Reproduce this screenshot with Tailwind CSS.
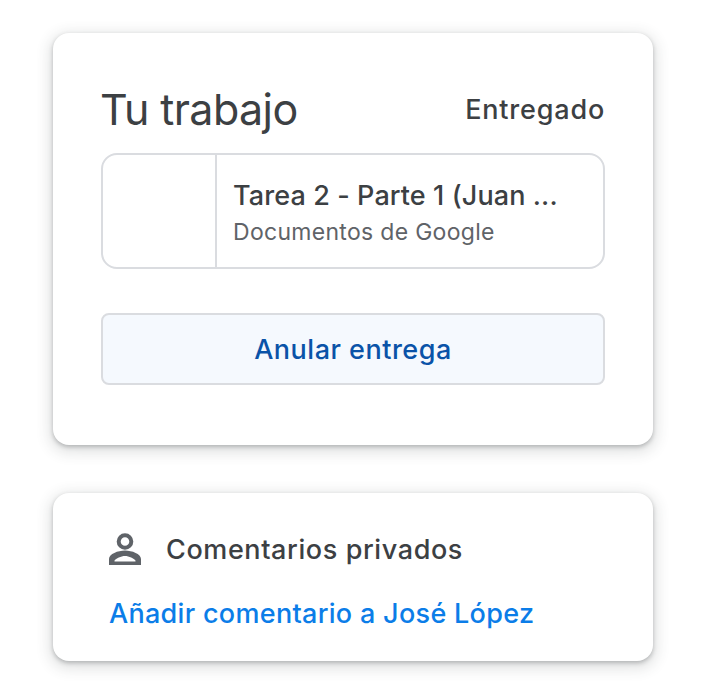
<!DOCTYPE html>
<html lang="es">
<head>
    <meta charset="UTF-8">
    <meta name="viewport" content="width=device-width, initial-scale=1.0">
    <title>Tu trabajo</title>
    <script src="https://cdn.jsdelivr.net/npm/@tailwindcss/browser@4"></script>
</head>
<body class="bg-white font-['Inter',sans-serif]">
    <main class="w-[726px] h-[686px] overflow-hidden pt-[33px] pl-[53px]">
        <section class="w-[600px] h-[412px] bg-white rounded-2xl shadow-[0_2px_4px_rgba(60,64,67,0.3),0_4px_14px_4px_rgba(60,64,67,0.14)] px-12 pt-[50px]">
            <div class="flex justify-between items-center h-[52px] mb-[18px]">
                <h2 class="text-[43px] leading-[52px] text-[#3c4043] tracking-[-0.6px] -ml-px">Tu trabajo</h2>
                <span class="text-[27px] font-medium text-[#3c4043] tracking-[0.8px] pt-0.5">Entregado</span>
            </div>
            <div class="flex h-[116px] border-2 border-[#dadce0] rounded-2xl">
                <div class="w-[114px] border-r-2 border-[#dadce0]"></div>
                <div class="pl-4 pt-[23px] whitespace-nowrap">
                    <p class="text-[27px] leading-9 font-medium text-[#3c4043] tracking-[0.1px]">Tarea 2 - Parte 1 (Juan ...</p>
                    <p class="text-[23px] leading-8 text-[#5f6368] tracking-[0.3px] mt-[2px]">Documentos de Google</p>
                </div>
            </div>
            <button class="block w-full h-[72px] mt-11 pt-0.5 bg-[#f5f9fe] border-2 border-[#dadce0] rounded-lg text-[27px] font-medium text-[#0a53a8] tracking-[0.5px]">Anular entrega</button>
        </section>
        <section class="w-[600px] h-[168px] mt-12 bg-white rounded-2xl shadow-[0_2px_4px_rgba(60,64,67,0.3),0_4px_14px_4px_rgba(60,64,67,0.14)] px-12 pt-8">
            <div class="flex items-center h-12">
                <svg class="w-12 h-12 shrink-0 fill-[#5f6368]" viewBox="0 0 48 48"><path fill-rule="evenodd" d="M24 8.2a8.3 8.3 0 1 1 0 16.6a8.3 8.3 0 1 1 0-16.6zM24 12.2a4.3 4.3 0 1 0 0 8.6a4.3 4.3 0 1 0 0-8.6zM8 40V34C8 29 17 25.5 24 25.5C31 25.5 40 29 40 34V40ZM13.5 36.5H34.5V35.5C33 33.5 28 31 24 31C20 31 15 33.5 13.5 35.5Z"/></svg>
                <span class="ml-[17px] pt-0.5 text-[27px] font-medium text-[#3c4043] tracking-[0.6px]">Comentarios privados</span>
            </div>
            <a class="block mt-[23px] ml-2 text-[27px] leading-9 font-medium text-[#0b7de8] tracking-[0.3px]">Añadir comentario a José López</a>
        </section>
    </main>
</body>
</html>
